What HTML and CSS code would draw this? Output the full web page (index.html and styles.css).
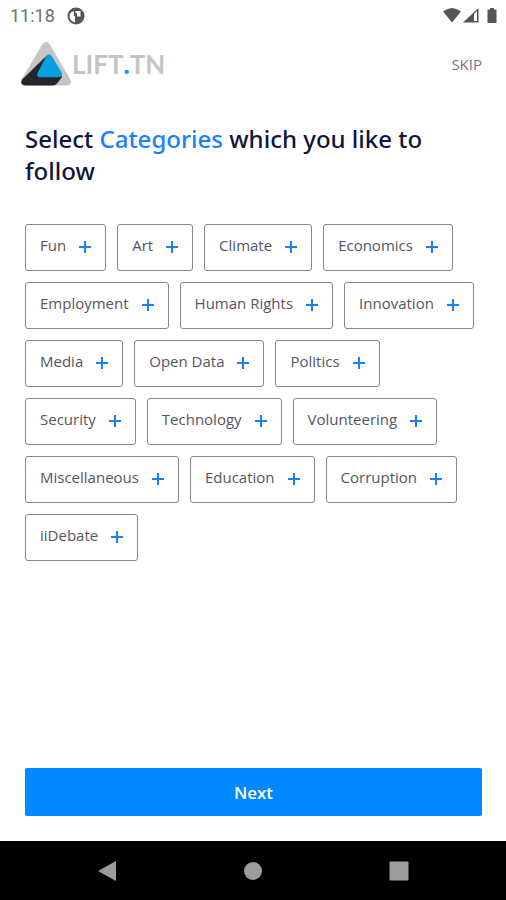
FILE: index.html
```html
<!DOCTYPE html>
<html lang="en">
<head>
<meta charset="utf-8">
<meta name="viewport" content="width=device-width, initial-scale=1">
<title>Select Categories</title>
<link rel="stylesheet" href="styles.css">
</head>
<body>
<svg class="sprite" aria-hidden="true">
  <symbol id="plus" viewBox="0 0 12 12"><path d="M6 0v12M0 6h12" fill="none" stroke="currentColor" stroke-width="2"/></symbol>
</svg>
<div class="status">
  <span class="time">11:18</span>
  <svg class="app-icon" viewBox="0 0 18 18" aria-hidden="true">
    <circle cx="9" cy="9" r="8.500" fill="#555"/>
    <path d="M5 4.500Q2.500 6.500 2.500 9.500Q3 14 8 15.500V9H7V4.500z" fill="#fff"/>
    <path d="M8.500 4h5v5.500H10V6H8.500z" fill="#fff"/>
  </svg>
  <svg class="indicators" viewBox="0 0 54 18" aria-hidden="true">
    <path d="M0 4.500Q9-2.500 18 4.500L9 15.500z" fill="#555"/>
    <path d="M35.500 1v14.500H20z" fill="#555"/>
    <path d="M31 7l3-3V14h-3z" fill="#fff"/>
    <path d="M47 1h4v1.500h2.500V16h-9V2.500H47z" fill="#555"/>
  </svg>
</div>
<header class="header">
  <div class="brand">
    <svg class="mark" viewBox="0 0 52 46" aria-hidden="true">
      <path d="M22 2.500Q25.500-2 29 2.500L50 38Q53 44.500 46 45H5Q-2 44.500 1 38z" fill="#c5c5c6"/>
      <path d="M26 14.500L1 39Q-1.500 44.500 5 45H32Q35 45 37 42.500L42 36z" fill="#24262e"/>
      <path d="M26 14.500Q29 11.500 31.500 15L41.500 32Q42.500 36.500 38.500 36.500H18.500Q15.500 36 17 32z" fill="#079fe0"/>
    </svg>
    <span class="name">LIFT<span class="dot">.</span>TN</span>
  </div>
  <a class="skip" href="#">SKIP</a>
</header>
<main class="main">
  <h1 class="title">Select <span class="accent">Categories</span> which you like to follow</h1>
  <div class="chips">
    <button class="chip">Fun<svg class="plus"><use href="#plus"/></svg></button>
    <button class="chip">Art<svg class="plus"><use href="#plus"/></svg></button>
    <button class="chip">Climate<svg class="plus"><use href="#plus"/></svg></button>
    <button class="chip">Economics<svg class="plus"><use href="#plus"/></svg></button>
    <button class="chip">Employment<svg class="plus"><use href="#plus"/></svg></button>
    <button class="chip">Human Rights<svg class="plus"><use href="#plus"/></svg></button>
    <button class="chip">Innovation<svg class="plus"><use href="#plus"/></svg></button>
    <button class="chip">Media<svg class="plus"><use href="#plus"/></svg></button>
    <button class="chip">Open Data<svg class="plus"><use href="#plus"/></svg></button>
    <button class="chip">Politics<svg class="plus"><use href="#plus"/></svg></button>
    <button class="chip">Security<svg class="plus"><use href="#plus"/></svg></button>
    <button class="chip">Technology<svg class="plus"><use href="#plus"/></svg></button>
    <button class="chip">Volunteering<svg class="plus"><use href="#plus"/></svg></button>
    <button class="chip">Miscellaneous<svg class="plus"><use href="#plus"/></svg></button>
    <button class="chip">Education<svg class="plus"><use href="#plus"/></svg></button>
    <button class="chip">Corruption<svg class="plus"><use href="#plus"/></svg></button>
    <button class="chip">iiDebate<svg class="plus"><use href="#plus"/></svg></button>
  </div>
  <button class="next">Next</button>
</main>
<nav class="nav" aria-label="System">
  <button class="key" aria-label="Back"><svg viewBox="0 0 20 20"><path d="M19 0v20L1 10z"/></svg></button>
  <button class="key" aria-label="Home"><svg viewBox="0 0 20 20"><circle cx="10" cy="10" r="9"/></svg></button>
  <button class="key" aria-label="Recent apps"><svg viewBox="0 0 20 20"><rect x="0.500" y="0.500" width="19" height="19" rx="1"/></svg></button>
</nav>
</body>
</html>
```
FILE: styles.css
```css
* {
  box-sizing: border-box;
}

body {
  margin: 0;
  min-height: 100vh;
  display: flex;
  flex-direction: column;
  background: #fff;
  font-family: "Open Sans", "Noto Sans", sans-serif;
}

button {
  border: 0;
  padding: 0;
  font: inherit;
}

.sprite {
  display: none;
}

.status {
  display: flex;
  align-items: center;
  height: 32px;
  padding: 0 9px 0 10px;
}

.time {
  color: #707070;
  font: 18px/32px Roboto, sans-serif;
}

.app-icon {
  width: 18px;
  height: 18px;
  margin-left: 12px;
}

.indicators {
  width: 54px;
  height: 18px;
  margin-left: auto;
}

.header {
  display: flex;
  align-items: center;
  justify-content: space-between;
  height: 64px;
  padding: 0 24px 0 21px;
}

.brand {
  display: flex;
  align-items: center;
}

.mark {
  width: 51px;
  height: 46px;
}

.name {
  color: #c5c5c6;
  font: bold 26px/32px Lato, sans-serif;
}

.dot {
  color: #079fe0;
  font-weight: 900;
}

.skip {
  color: #76767c;
  font-size: 15px;
  line-height: 20px;
  text-decoration: none;
}

.main {
  flex: 1;
  display: flex;
  flex-direction: column;
  padding: 27px 24px 25px 25px;
}

.title {
  margin: 0 0 37px;
  color: #10153c;
  font-family: "Noto Sans", "Open Sans", sans-serif;
  font-size: 24px;
  font-weight: 500;
  line-height: 32px;
}

.accent {
  color: #1a80ff;
}

.chips {
  display: flex;
  flex-wrap: wrap;
  gap: 11px;
}

.chip {
  display: flex;
  align-items: center;
  gap: 13px;
  height: 47px;
  padding: 0 14px 5px;
  border: 1px solid #85858a;
  border-radius: 3px;
  background: #fff;
  color: #55555e;
  font-size: 15px;
}

.plus {
  width: 12px;
  height: 12px;
  margin-top: 4px;
  color: #1a80ff;
}

.next {
  height: 48px;
  margin-top: auto;
  border-radius: 2px;
  background: #0088ff;
  color: #fff;
  font-size: 17px;
  font-weight: 600;
}

.nav {
  display: flex;
  align-items: center;
  justify-content: space-around;
  height: 59px;
  padding: 0 34px;
  background: #000;
}

.key {
  display: flex;
  background: none;
}

.key svg {
  width: 20px;
  height: 20px;
  fill: #9c9c9c;
}
```
